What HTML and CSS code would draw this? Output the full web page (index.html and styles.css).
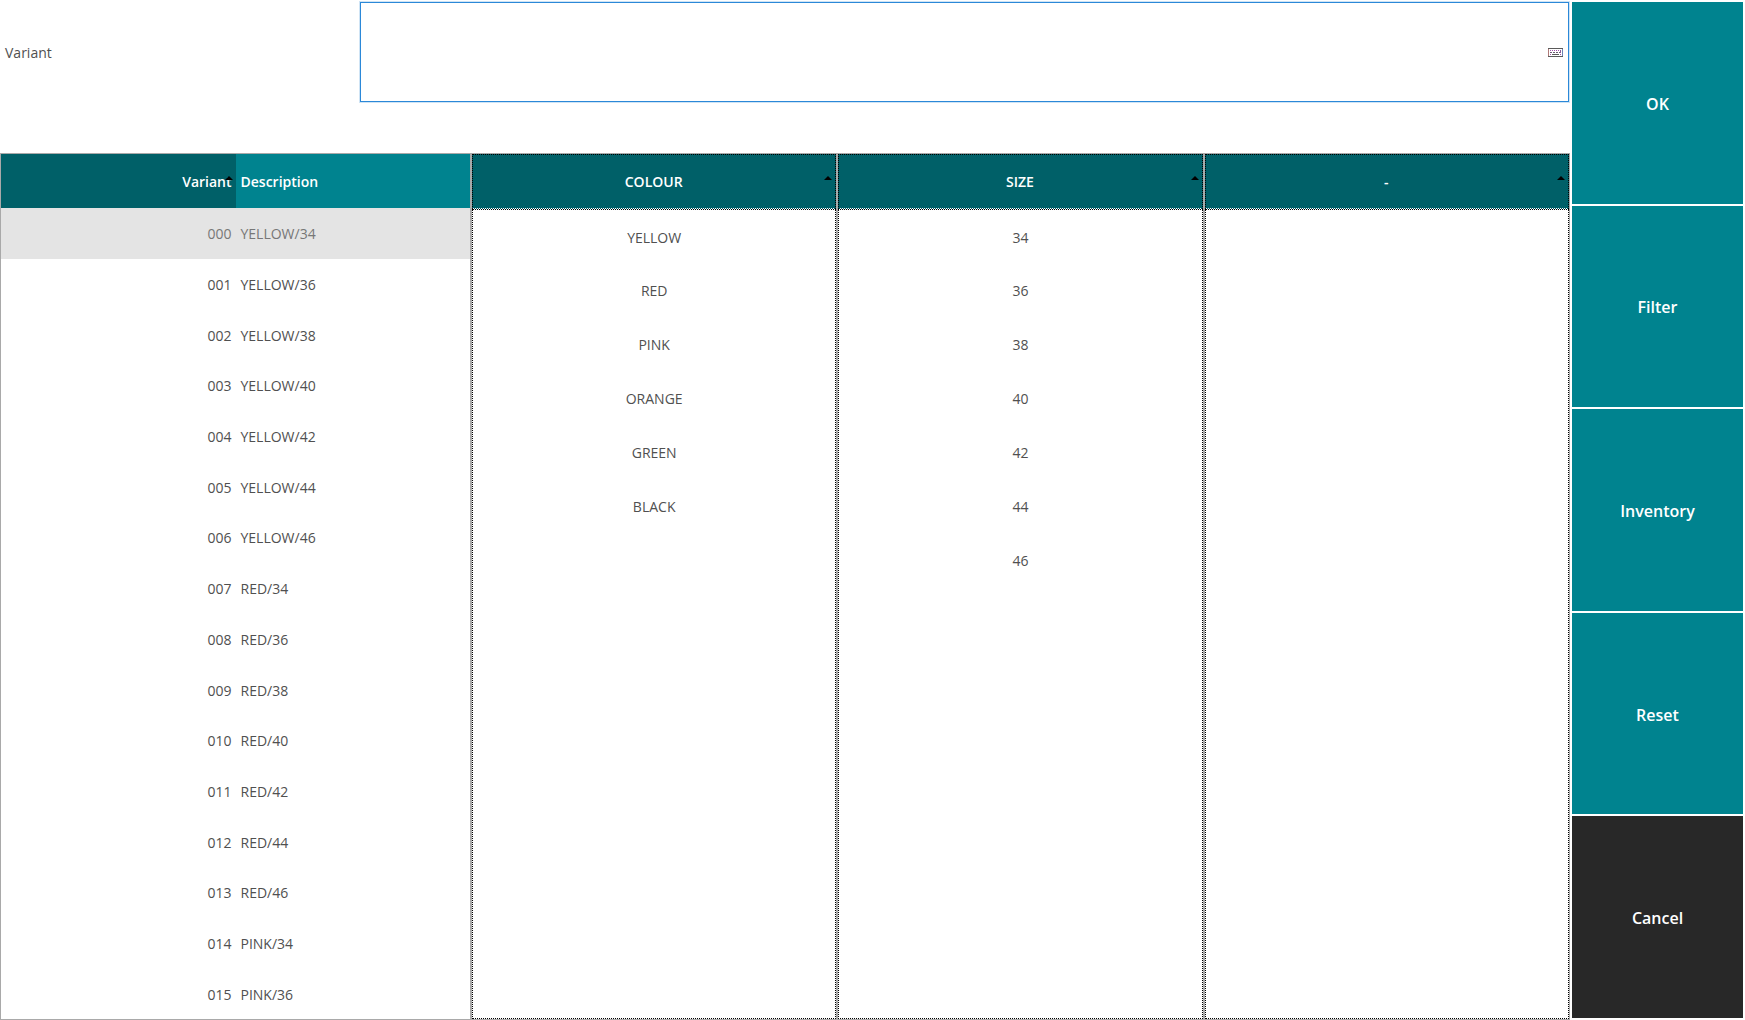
FILE: index.html
```
<!DOCTYPE html>
<html lang="en">
<head>
  <meta charset="UTF-8" />
  <title>Variant lookup</title>
  <link rel="stylesheet" href="styles.css">
</head>
<body>

<div class="screen">
  <main class="main">
    <div class="search">
      <label for="variant">Variant</label>
      <div class="field">
        <input type="text" id="variant" autocomplete="off">
        <button class="keyboard" aria-label="Keyboard">
          <svg width="15" height="9" viewBox="0 0 15 9" shape-rendering="crispEdges">
            <path d="M0 .5H15M0 8.5H15M4 6.5H11" stroke="#5a5a5a" fill="none"/>
            <path d="M.5 1V8" stroke="#b07a78"/>
            <path d="M14.5 1V8" stroke="#6c82b4"/>
            <path d="M2 2.5H13M2 6.5H3M12 6.5H13" stroke="#a04fa8" stroke-dasharray="1 1"/>
            <path d="M2 4.5H12" stroke="#6a5a70" stroke-dasharray="2 1"/>
            <path d="M12.5 2V5" stroke="#8a5c96"/>
          </svg>
        </button>
      </div>
    </div>

    <div class="panels">
      <div class="panel list">
        <table>
          <thead>
            <tr>
              <th class="sorted">Variant<svg class="arrow" width="8" height="4" viewBox="0 0 8 4"><path d="M4 0L8 4H0z"/></svg></th>
              <th>Description</th>
            </tr>
          </thead>
          <tbody>
            <tr class="selected"><td>000</td><td>YELLOW/34</td></tr>
            <tr><td>001</td><td>YELLOW/36</td></tr>
            <tr><td>002</td><td>YELLOW/38</td></tr>
            <tr><td>003</td><td>YELLOW/40</td></tr>
            <tr><td>004</td><td>YELLOW/42</td></tr>
            <tr><td>005</td><td>YELLOW/44</td></tr>
            <tr><td>006</td><td>YELLOW/46</td></tr>
            <tr><td>007</td><td>RED/34</td></tr>
            <tr><td>008</td><td>RED/36</td></tr>
            <tr><td>009</td><td>RED/38</td></tr>
            <tr><td>010</td><td>RED/40</td></tr>
            <tr><td>011</td><td>RED/42</td></tr>
            <tr><td>012</td><td>RED/44</td></tr>
            <tr><td>013</td><td>RED/46</td></tr>
            <tr><td>014</td><td>PINK/34</td></tr>
            <tr><td>015</td><td>PINK/36</td></tr>
          </tbody>
        </table>
      </div>

      <div class="panel dimension">
        <table>
          <thead>
            <tr><th>COLOUR<svg class="arrow" width="8" height="4" viewBox="0 0 8 4"><path d="M4 0L8 4H0z"/></svg></th></tr>
          </thead>
          <tbody>
            <tr><td>YELLOW</td></tr>
            <tr><td>RED</td></tr>
            <tr><td>PINK</td></tr>
            <tr><td>ORANGE</td></tr>
            <tr><td>GREEN</td></tr>
            <tr><td>BLACK</td></tr>
          </tbody>
        </table>
      </div>

      <div class="panel dimension">
        <table>
          <thead>
            <tr><th>SIZE<svg class="arrow" width="8" height="4" viewBox="0 0 8 4"><path d="M4 0L8 4H0z"/></svg></th></tr>
          </thead>
          <tbody>
            <tr><td>34</td></tr>
            <tr><td>36</td></tr>
            <tr><td>38</td></tr>
            <tr><td>40</td></tr>
            <tr><td>42</td></tr>
            <tr><td>44</td></tr>
            <tr><td>46</td></tr>
          </tbody>
        </table>
      </div>

      <div class="panel dimension">
        <table>
          <thead>
            <tr><th>-<svg class="arrow" width="8" height="4" viewBox="0 0 8 4"><path d="M4 0L8 4H0z"/></svg></th></tr>
          </thead>
          <tbody>
            <tr><td></td></tr>
          </tbody>
        </table>
      </div>
    </div>
  </main>

  <div class="actions">
    <button>OK</button>
    <button>Filter</button>
    <button>Inventory</button>
    <button>Reset</button>
    <button class="cancel">Cancel</button>
  </div>
</div>

</body>
</html>
```
FILE: styles.css
```
* {
  box-sizing: border-box;
}

body {
  margin: 0;
  font-family: 'Segoe UI', 'Open Sans', sans-serif;
  font-size: 14px;
  line-height: 20px;
  font-weight: 500;
  color: #505050;
  background: #fff;
}

.screen {
  display: grid;
  grid-template-columns: 1fr 175px;
  height: 100vh;
}

.main {
  display: grid;
  grid-template-rows: 15% minmax(0, 1fr);
}

/* search field */
.search {
  display: grid;
  grid-template-columns: 360px 1fr;
  align-items: center;
  align-self: start;
  height: 102px;
  padding: 2px 1px 0 0;
}

.search label {
  padding: 2px 5px 0;
}

.field {
  position: relative;
  height: 100%;
}

.field input {
  width: 100%;
  height: 100%;
  padding: 0 40px 0 8px;
  border: 1px solid #2b88d8;
  box-shadow: 0 0 0 1px #cfe4f5;
  font: inherit;
  outline: none;
}

.keyboard {
  position: absolute;
  top: 0;
  right: 0;
  height: 100%;
  padding: 0 6px;
  border: none;
  background: none;
  cursor: pointer;
}

.keyboard svg {
  display: block;
}

/* tables */
.panels {
  display: grid;
  grid-template-columns: 30% 1fr 1fr 1fr;
  min-height: 0;
}

.panel {
  border: 1px solid #a9a9a9;
  overflow: hidden;
}

table {
  width: 100%;
  border-collapse: separate;
  border-spacing: 0;
  table-layout: fixed;
}

th {
  position: relative;
  height: 54px;
  padding: 2px 4px 0;
  background: #00838f;
  color: #fff;
  font-weight: 600;
}

th.sorted,
.dimension th {
  background: #006068;
}

td {
  padding: 2px 4px 0;
}

.arrow {
  position: absolute;
  top: 22px;
  right: 3px;
}

.list table {
  height: 100%;
}

.list th,
.list td {
  text-align: left;
}

.list th:first-child,
.list td:first-child {
  text-align: right;
}

.list th:last-child,
.list td:last-child {
  padding-left: 5px;
}

.selected {
  background: #e4e4e4;
  color: #777;
}

.dimension {
  position: relative;
}

/* dotted focus frame just inside the grey border */
.dimension::after {
  content: "";
  position: absolute;
  inset: 0;
  border: 1px dotted #000;
  pointer-events: none;
}

.dimension th {
  height: 55px;
  border-right: 1px dotted #fff;
  border-bottom: 1px dotted #fff;
}

.dimension td {
  height: 54px;
  text-align: center;
}

.dimension tbody tr:first-child td {
  border-top: 1px dotted #000;
}

/* action buttons */
.actions {
  display: flex;
  flex-direction: column;
  gap: 2px;
  padding: 2px;
}

.actions button {
  flex: 1;
  padding: 2px 0 0;
  border: none;
  background: #00838f;
  color: #fff;
  font: inherit;
  font-size: 16px;
  font-weight: 600;
  cursor: pointer;
}

.actions button:hover {
  background: #006068;
}

.actions .cancel {
  background: #282828;
}
```
